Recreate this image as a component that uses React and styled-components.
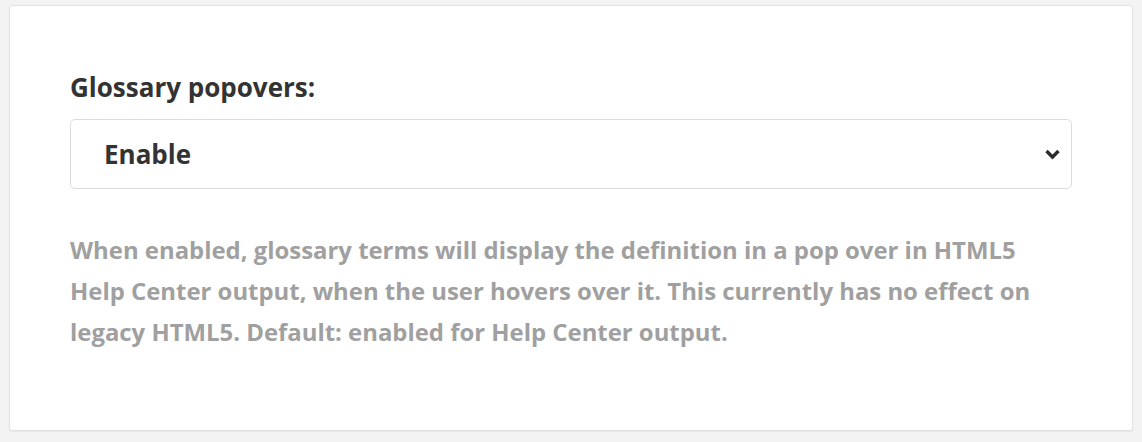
import React from 'react';
import styled, { createGlobalStyle } from 'styled-components';

const GlobalStyle = createGlobalStyle`
  html, body {
    margin: 0;
    padding: 0;
    background: #f3f3f3;
  }
  body {
    font-family: "Open Sans", "Liberation Sans", sans-serif;
  }
`;

const Page = styled.div`
  padding: 5px 9px 10px 9px;
`;

const Card = styled.div`
  background: #fff;
  border: 1px solid #e1e1e1;
  border-radius: 3px;
  box-shadow: 0 1px 1px rgba(0, 0, 0, 0.06);
  height: 426px;
  box-sizing: border-box;
  padding: 66px 60px 0 60px;
`;

const Label = styled.label`
  display: block;
  font-size: 26px;
  font-weight: 700;
  color: #333;
  line-height: 30px;
  margin-bottom: 17px;
`;

const SelectBox = styled.div`
  display: flex;
  align-items: center;
  justify-content: space-between;
  height: 70px;
  box-sizing: border-box;
  border: 1.5px solid #dcdcdc;
  border-radius: 5px;
  padding: 0 10px 0 33px;
  font-size: 26px;
  font-weight: 700;
  color: #333;
`;

const Help = styled.p`
  margin: 40px 0 0 0;
  font-size: 23.9px;
  font-weight: 700;
  color: #a0a0a0;
  line-height: 41px;
`;

const Chevron = () => (
  <svg width="17" height="12" viewBox="0 0 17 12">
    <path d="M2.5 3 L8.5 9 L14.5 3" fill="none" stroke="#2b2b2b" strokeWidth="3.4" />
  </svg>
);

export default function App() {
  return (
    <Page>
      <GlobalStyle />
      <Card>
        <Label>Glossary popovers:</Label>
        <SelectBox>
          <span>Enable</span>
          <Chevron />
        </SelectBox>
        <Help>
          When enabled, glossary terms will display the definition in a pop over in HTML5 Help Center output, when the user hovers over it. This currently has no effect on legacy HTML5. Default: enabled for Help Center output.
        </Help>
      </Card>
    </Page>
  );
}
